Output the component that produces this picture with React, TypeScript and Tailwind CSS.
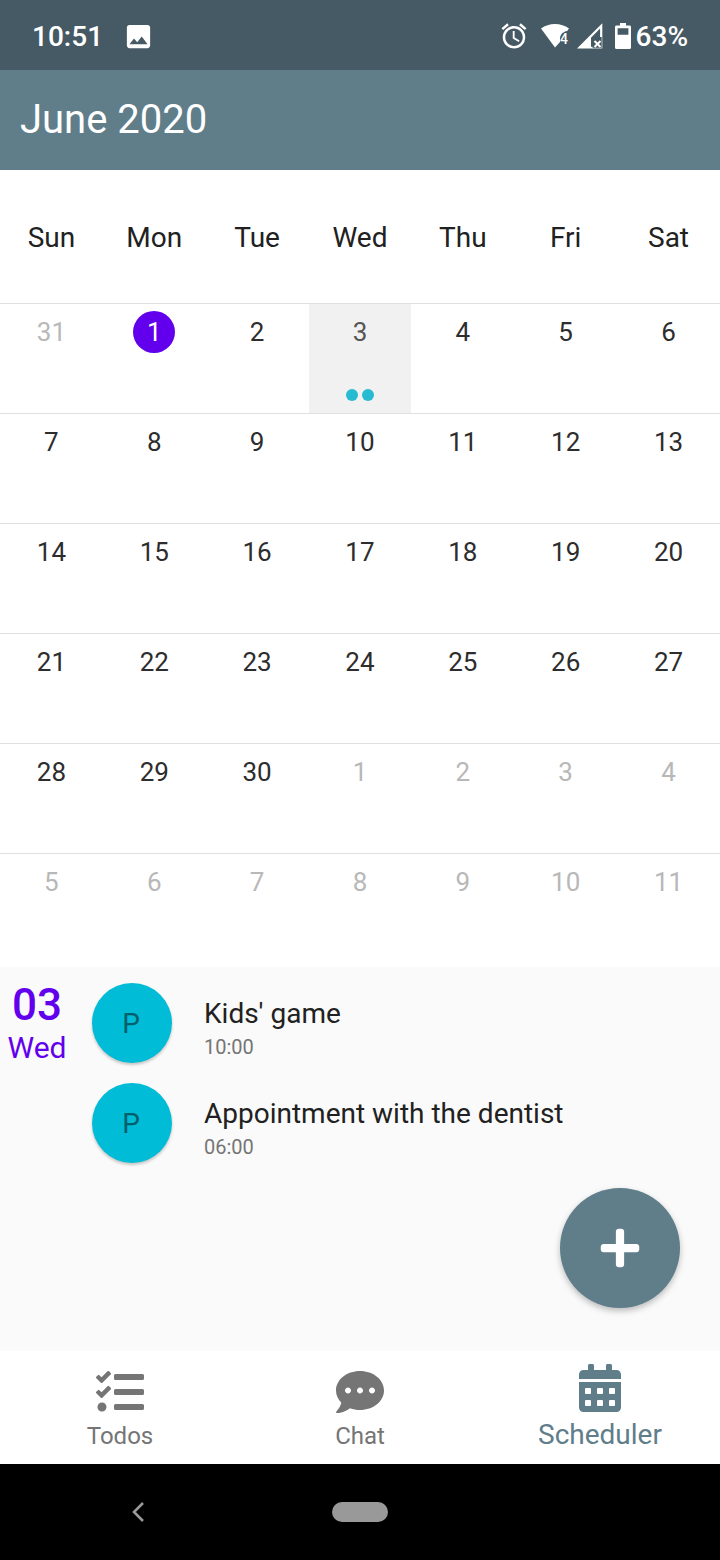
import { useState } from "react";
import { FaCalendarAlt, FaCommentDots, FaPlus, FaTasks } from "react-icons/fa";
import { MdAlarm, MdImage } from "react-icons/md";

const weekdays = ["Sun", "Mon", "Tue", "Wed", "Thu", "Fri", "Sat"];

type Day = { date: string; label: number; inMonth: boolean; events: number };

const today = "2020-06-01";

function buildWeeks(): Day[][] {
  const weeks: Day[][] = [];
  for (let w = 0; w < 6; w++) {
    const week: Day[] = [];
    for (let d = 0; d < 7; d++) {
      const day = new Date(Date.UTC(2020, 4, 31 + w * 7 + d));
      const date = day.toISOString().slice(0, 10);
      week.push({
        date,
        label: day.getUTCDate(),
        inMonth: day.getUTCMonth() === 5,
        events: date === "2020-06-03" ? 2 : 0,
      });
    }
    weeks.push(week);
  }
  return weeks;
}

const weeks = buildWeeks();

const appointments = [
  { initial: "P", title: "Kids' game", time: "10:00" },
  { initial: "P", title: "Appointment with the dentist", time: "06:00" },
];

function WifiIcon() {
  return (
    <svg width="28" height="24" viewBox="0 0 28 24" aria-hidden="true">
      <path
        fill="#fff"
        d="M0 4.6C4 1.6 8.800 0 14 0s10 1.600 14 4.600L26.200 7c-4.400.6-7.200 3.600-7.200 8v3L14 23.500z"
      />
      <text x="19" y="20" fill="#fff" fontSize="14" fontWeight="500" fontFamily="Roboto, sans-serif">
        4
      </text>
    </svg>
  );
}

function SignalIcon() {
  return (
    <svg width="26" height="26" viewBox="0 0 26 26" aria-hidden="true">
      <path fill="#fff" d="M0 25.500 25.300.300V14h-2.200V5.600L14 14.800v8.900h1.500v1.800z" />
      <path fill="none" stroke="#fff" strokeWidth="2" d="m17.500 18 6 6m0-6-6 6" />
      <path fill="none" stroke="#fff" strokeWidth="0.600" d="M15 25.200h10V14" />
    </svg>
  );
}

function BatteryIcon() {
  return (
    <svg width="16" height="26" viewBox="0 0 16 26" aria-hidden="true">
      <path
        fill="#fff"
        fillRule="evenodd"
        d="M5 0h6v2.600h3.500Q16 2.600 16 4v20.500Q16 26 14.500 26h-13Q0 26 0 24.500V4q0-1.400 1.500-1.400H5zM2.600 5.200v6.600h10.800V5.200z"
      />
    </svg>
  );
}

function StatusBar() {
  return (
    <div className="flex h-[70px] items-center justify-between bg-[#465a65] pt-[2px] pr-8 pl-8 text-[28px] leading-9 font-medium text-white">
      <div className="flex items-center gap-5">
        <span className="pt-[2px]">10:51</span>
        <MdImage className="size-[31px]" />
      </div>
      <div className="flex items-center">
        <MdAlarm className="size-[30px]" />
        <span className="ml-3">
          <WifiIcon />
        </span>
        <span className="ml-2">
          <SignalIcon />
        </span>
        <span className="ml-3">
          <BatteryIcon />
        </span>
        <span className="ml-[5px] pt-[2px]">63%</span>
      </div>
    </div>
  );
}

function numberStyle(day: Day, selected: boolean) {
  if (day.date === today) return "bg-[#6200ee] text-white";
  if (!day.inMonth) return "text-[#b8b8b8]";
  return selected ? "text-[#555555]" : "text-[#2d2d2d]";
}

function Calendar() {
  const [selected, setSelected] = useState("2020-06-03");
  return (
    <table className="w-full table-fixed border-separate border-spacing-0">
      <thead>
        <tr>
          {weekdays.map((name) => (
            <th
              key={name}
              scope="col"
              className="h-[133px] p-0 pt-[2px] text-center align-middle text-[28px] leading-9 font-normal text-[#212121]"
            >
              {name}
            </th>
          ))}
        </tr>
      </thead>
      <tbody>
        {weeks.map((week) => (
          <tr key={week[0].date}>
            {week.map((day) => (
              <td key={day.date} className="border-t border-[#e0e0e0] p-0">
                <button
                  type="button"
                  aria-pressed={day.date === selected}
                  onClick={() => setSelected(day.date)}
                  className={`flex h-[109px] w-full flex-col items-center justify-between pt-[7px] pb-3 ${
                    day.date === selected ? "bg-[#f1f1f1]" : "bg-white"
                  }`}
                >
                  <span
                    className={`flex size-[42px] items-center justify-center rounded-full text-[26px] leading-8 ${numberStyle(
                      day,
                      day.date === selected,
                    )}`}
                  >
                    {day.label}
                  </span>
                  <span className="flex gap-1">
                    {Array.from({ length: day.events }, (_, i) => (
                      <span key={i} className="size-3 rounded-full bg-[#26bbd0]" />
                    ))}
                  </span>
                </button>
              </td>
            ))}
          </tr>
        ))}
      </tbody>
    </table>
  );
}

function Agenda() {
  return (
    <section className="relative flex flex-1 gap-4 bg-[#fafafa] pt-4 pb-40">
      <div className="flex w-[76px] flex-col items-center pr-[2px] text-[#6200ee]">
        <span className="text-[44px] leading-[44px] font-medium">03</span>
        <span className="text-[30px] leading-[42px]">Wed</span>
      </div>
      <ul className="flex flex-1 flex-col gap-5">
        {appointments.map((item) => (
          <li key={item.title} className="flex gap-8">
            <span className="flex size-20 items-center justify-center rounded-full bg-[#00bcd6] pt-[2px] pr-[2px] text-[28px] text-[#005f6b] shadow-[0_2px_3px_rgba(0,0,0,0.22)]">
              {item.initial}
            </span>
            <div className="flex flex-col pt-[13px]">
              <span className="text-[28px] leading-9 text-[#212121]">{item.title}</span>
              <span className="text-xl leading-[30px] text-[#757575]">{item.time}</span>
            </div>
          </li>
        ))}
      </ul>
      <button
        type="button"
        aria-label="Add appointment"
        className="absolute right-10 bottom-[43px] flex size-[120px] items-center justify-center rounded-full bg-[#607d8a] text-white shadow-[0_3px_6px_rgba(0,0,0,0.25)]"
      >
        <FaPlus className="size-11" />
      </button>
    </section>
  );
}

function Tabs() {
  return (
    <nav className="grid h-[113px] grid-cols-3 bg-white text-2xl text-[#757575]">
      <a href="#todos" className="flex flex-col items-center gap-1 pt-[17px]">
        <FaTasks className="size-12" />
        <span className="leading-8">Todos</span>
      </a>
      <a href="#chat" className="flex flex-col items-center gap-1 pt-[17px]">
        <FaCommentDots className="size-12" />
        <span className="leading-8">Chat</span>
      </a>
      <a
        href="#scheduler"
        aria-current="page"
        className="flex flex-col items-center gap-1 pt-[13px] text-[#607d8a]"
      >
        <FaCalendarAlt className="size-12" />
        <span className="text-[28px] leading-[38px]">Scheduler</span>
      </a>
    </nav>
  );
}

function SystemBar() {
  return (
    <div className="grid h-24 grid-cols-[1fr_auto_1fr] items-center bg-black">
      <button type="button" aria-label="Back" className="ml-[132px] justify-self-start">
        <svg width="12" height="20" viewBox="0 0 12 20" aria-hidden="true">
          <path fill="none" stroke="#999" strokeWidth="2.600" d="M11 1 2 10l9 9" />
        </svg>
      </button>
      <button type="button" aria-label="Home" className="h-5 w-14 rounded-full bg-[#999999]" />
    </div>
  );
}

export default function App() {
  return (
    <div className="flex min-h-screen flex-col bg-white font-[Roboto,sans-serif]">
      <StatusBar />
      <header className="flex h-[100px] items-center bg-[#607d8a] px-5">
        <h1 className="text-[40px] leading-[48px] text-white">June 2020</h1>
      </header>
      <main className="flex flex-1 flex-col">
        <div className="pb-1">
          <Calendar />
        </div>
        <Agenda />
      </main>
      <Tabs />
      <SystemBar />
    </div>
  );
}
